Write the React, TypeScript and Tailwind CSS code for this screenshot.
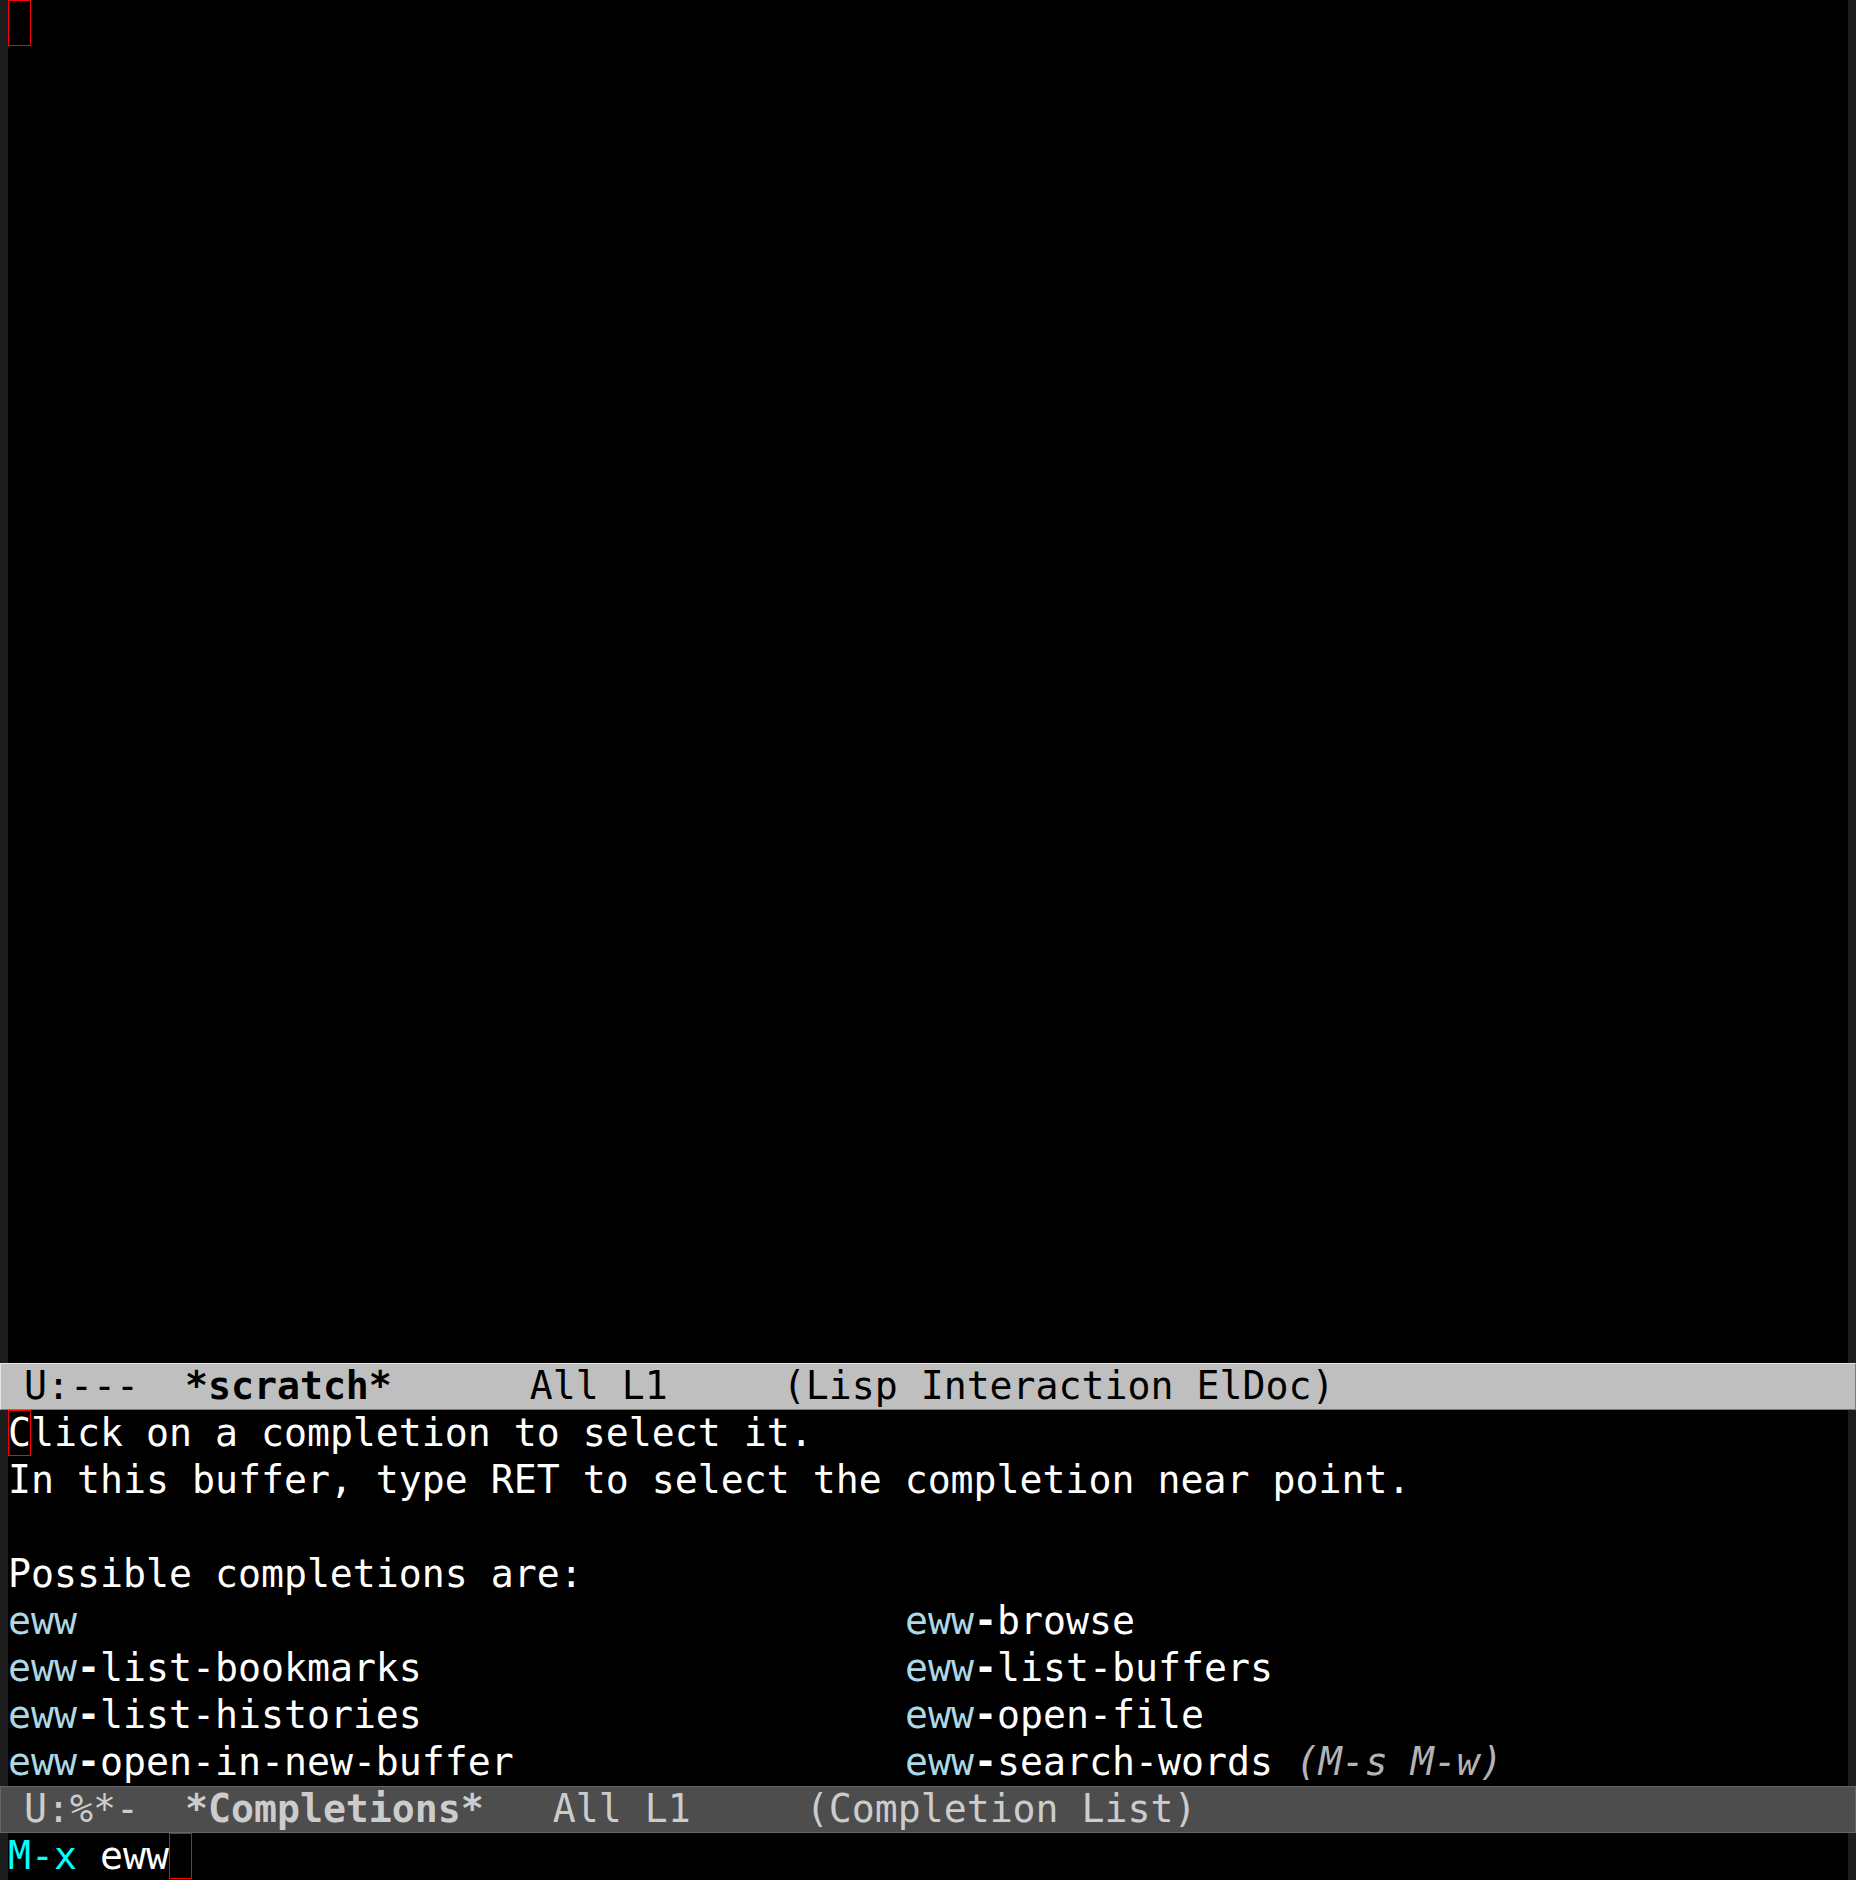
import React from 'react';

const Fringe = () => <div className="w-[8px] shrink-0 bg-[#1c1c1c]" />;

type Cand = { rest?: string; note?: string };

const Candidate: React.FC<Cand> = ({ rest, note }) => (
  <div>
    <span className="text-[#add8e6]">eww</span>
    {rest && (
      <>
        <span className="font-bold">{rest[0]}</span>
        {rest.slice(1)}
      </>
    )}
    {note && <span className="italic text-[#b3b3b3]">{' ' + note}</span>}
  </div>
);

const left: Cand[] = [{}, { rest: '-list-bookmarks' }, { rest: '-list-histories' }, { rest: '-open-in-new-buffer' }];
const right: Cand[] = [
  { rest: '-browse' },
  { rest: '-list-buffers' },
  { rest: '-open-file' },
  { rest: '-search-words', note: '(M-s M-w)' },
];

const App: React.FC = () => {
  return (
    <div className="flex h-[1880px] w-[1856px] flex-col overflow-hidden bg-black font-['DejaVu_Sans_Mono',monospace] text-[38.2px] leading-[47px] text-white whitespace-pre">
      {/* *scratch* window */}
      <div className="flex h-[1363px] shrink-0">
        <Fringe />
        <div className="flex-1">
          <div className="h-[46px] w-[23px] border border-[#ff0000]" />
        </div>
        <Fringe />
      </div>

      {/* active mode line */}
      <div className="h-[47px] shrink-0 border border-t-[#e4e4e4] border-l-[#e4e4e4] border-b-[#7a7a7a] border-r-[#7a7a7a] bg-[#bfbfbf] leading-[45px] text-black">
        {' U:---  '}
        <span className="font-bold">*scratch*</span>
        {'      All L1     (Lisp Interaction ElDoc)'}
      </div>

      {/* *Completions* window */}
      <div className="flex h-[376px] shrink-0">
        <Fringe />
        <div className="flex-1">
          <div>
            <span className="inline-block h-[46px] align-top leading-[46px] outline outline-1 -outline-offset-1 outline-[#ff0000]">C</span>
            lick on a completion to select it.
          </div>
          <div>In this buffer, type RET to select the completion near point.</div>
          <div>{' '}</div>
          <div>Possible completions are:</div>
          <div className="grid grid-cols-[897px_1fr]">
            {left.map((l, i) => (
              <React.Fragment key={i}>
                <Candidate {...l} />
                <Candidate {...right[i]} />
              </React.Fragment>
            ))}
          </div>
        </div>
        <Fringe />
      </div>

      {/* inactive mode line */}
      <div className="h-[47px] shrink-0 border border-[#666666] bg-[#4d4d4d] leading-[45px] text-[#cccccc]">
        {' U:%*-  '}
        <span className="font-bold">*Completions*</span>
        {'   All L1     (Completion List)'}
      </div>

      {/* minibuffer */}
      <div className="flex h-[47px] shrink-0">
        <Fringe />
        <div className="flex-1">
          <span className="text-[#00ffff]">M-x</span>
          {' eww'}
          <span className="inline-block h-[46px] w-[23px] align-top border border-[#ff0000]" />
        </div>
        <Fringe />
      </div>
    </div>
  );
};

export default App;
